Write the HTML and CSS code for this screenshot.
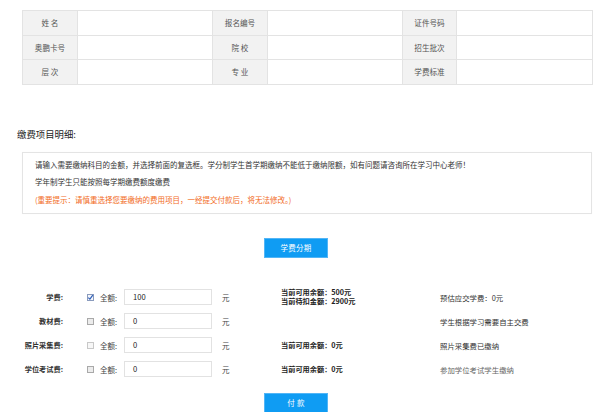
FILE: index.html
```html
<!DOCTYPE html>
<html lang="zh">
<head>
<meta charset="utf-8">
<title>缴费</title>
<link rel="stylesheet" href="styles.css">
</head>
<body>
<div class="page">
  <table class="info">
    <colgroup>
      <col class="c-l"><col class="c-v"><col class="c-l"><col class="c-v"><col class="c-l2"><col class="c-v2">
    </colgroup>
    <tr>
      <td class="lab">姓 名</td><td class="val"></td>
      <td class="lab">报名编号</td><td class="val"></td>
      <td class="lab">证件号码</td><td class="val"></td>
    </tr>
    <tr>
      <td class="lab">奥鹏卡号</td><td class="val"></td>
      <td class="lab">院 校</td><td class="val"></td>
      <td class="lab">招生批次</td><td class="val"></td>
    </tr>
    <tr>
      <td class="lab">层 次</td><td class="val"></td>
      <td class="lab">专 业</td><td class="val"></td>
      <td class="lab">学费标准</td><td class="val"></td>
    </tr>
  </table>

  <h3 class="title">缴费项目明细:</h3>

  <div class="notice">
    <p>请输入需要缴纳科目的金额，并选择前面的复选框。学分制学生首学期缴纳不能低于缴纳限额，如有问题请咨询所在学习中心老师！</p>
    <p>学年制学生只能按照每学期缴费额度缴费</p>
    <p class="warn">(重要提示：请慎重选择您要缴纳的费用项目，一经提交付款后，将无法修改。)</p>
  </div>

  <div class="btn-row"><span class="btn">学费分期</span></div>

  <div class="form">
    <div class="row">
      <span class="f-label">学费:</span>
      <span class="chk on"><svg viewBox="0 0 7 7" width="7" height="7"><path d="M1.3 3.6 L2.9 5.2 L5.8 1.2" fill="none" stroke="#2f5fb8" stroke-width="1.2"/></svg></span>
      <span class="f-full">全额:</span>
      <span class="f-input">100</span>
      <span class="f-unit">元</span>
      <span class="f-bal bold">当前可用余额：500元<br>当前待扣金额：2900元</span>
      <span class="f-note">预估应交学费：0元</span>
    </div>
    <div class="row">
      <span class="f-label">教材费:</span>
      <span class="chk"></span>
      <span class="f-full">全额:</span>
      <span class="f-input">0</span>
      <span class="f-unit">元</span>
      <span class="f-bal"></span>
      <span class="f-note">学生根据学习需要自主交费</span>
    </div>
    <div class="row">
      <span class="f-label">照片采集费:</span>
      <span class="chk light"></span>
      <span class="f-full">全额:</span>
      <span class="f-input">0</span>
      <span class="f-unit">元</span>
      <span class="f-bal bold">当前可用余额：0元</span>
      <span class="f-note">照片采集费已缴纳</span>
    </div>
    <div class="row">
      <span class="f-label">学位考试费:</span>
      <span class="chk"></span>
      <span class="f-full">全额:</span>
      <span class="f-input">0</span>
      <span class="f-unit">元</span>
      <span class="f-bal bold">当前可用余额：0元</span>
      <span class="f-note light">参加学位考试学生缴纳</span>
    </div>
  </div>

  <div class="btn-row pay"><span class="btn">付 款</span></div>
</div>
</body>
</html>
```

FILE: styles.css
```css
html, body {
  margin: 0;
  padding: 0;
  background: #fff;
}
body {
  font-family: "Noto Sans CJK SC", "Noto Sans", sans-serif;
  font-size: 7.5px;
  color: #333;
}
.page {
  padding: 10px 6px 0 22px;
}
.info {
  width: 570px;
  border-collapse: collapse;
  table-layout: fixed;
}
.c-l { width: 55px; }
.c-v { width: 135px; }
.c-l2 { width: 54px; }
.c-v2 { width: 136px; }
.info td {
  border: 1px solid #e3e3e3;
  height: 23.6px;
  padding: 0;
  color: #555;
  font-size: 7.6px;
}
.info .lab {
  background: #f2f2f2;
  text-align: center;
}
.info .val {
  background: #fff;
}
.title {
  margin: 42px 0 0 -5px;
  font-size: 9.4px;
  line-height: 14px;
  font-weight: normal;
  color: #222;
}
.notice {
  margin-top: 11px;
  border: 1px solid #e4e4e4;
  padding: 3px 12px 5px 12px;
  box-shadow: 0 0 1px rgba(0,0,0,0.04);
}
.notice p {
  margin: 0;
  line-height: 17.5px;
  color: #333;
  font-size: 7.5px;
}
.notice .warn {
  color: #f26b1d;
}
.btn-row {
  display: flex;
  padding-left: 242px;
  margin-top: 24px;
}
.btn {
  display: block;
  width: 62px;
  height: 18px;
  line-height: 18px;
  text-align: center;
  background: #0f9cf3;
  border: 1px solid #52b5f6;
  color: #fff;
  font-size: 7.5px;
  letter-spacing: 0.3px;
}
.btn-row.pay {
  margin-top: 12px;
}
.form {
  margin-top: 27px;
  margin-left: -22px;
}
.row {
  display: flex;
  align-items: center;
  height: 24px;
}
.f-label {
  width: 63px;
  text-align: right;
  font-weight: bold;
  color: #333;
  font-size: 7.2px;
}
.chk {
  box-sizing: border-box;
  width: 7px;
  height: 7px;
  margin-left: 24px;
  border: 1px solid #a9a9a9;
  background: #ececec;
  display: flex;
}
.chk svg {
  display: block;
  margin: -1px;
}
.chk.on {
  background: #f4f6fb;
  border-color: #8a9bbd;
}
.chk.light {
  border-color: #c8c8c8;
  background: #f7f7f7;
}
.f-full {
  width: 24px;
  margin-left: 6px;
  color: #444;
}
.f-input {
  box-sizing: border-box;
  width: 88px;
  height: 16px;
  line-height: 14px;
  border: 1px solid #e2e2e2;
  padding-left: 8px;
  color: #222;
  font-size: 7.6px;
}
.f-unit {
  width: 69px;
  padding-left: 10px;
  box-sizing: border-box;
  color: #444;
}
.f-bal {
  width: 159px;
  line-height: 9.5px;
  color: #222;
  font-size: 7.2px;
}
.f-bal.bold {
  font-weight: bold;
}
.f-note {
  color: #333;
  font-size: 7.4px;
}
.f-note.light {
  color: #666;
}
```
